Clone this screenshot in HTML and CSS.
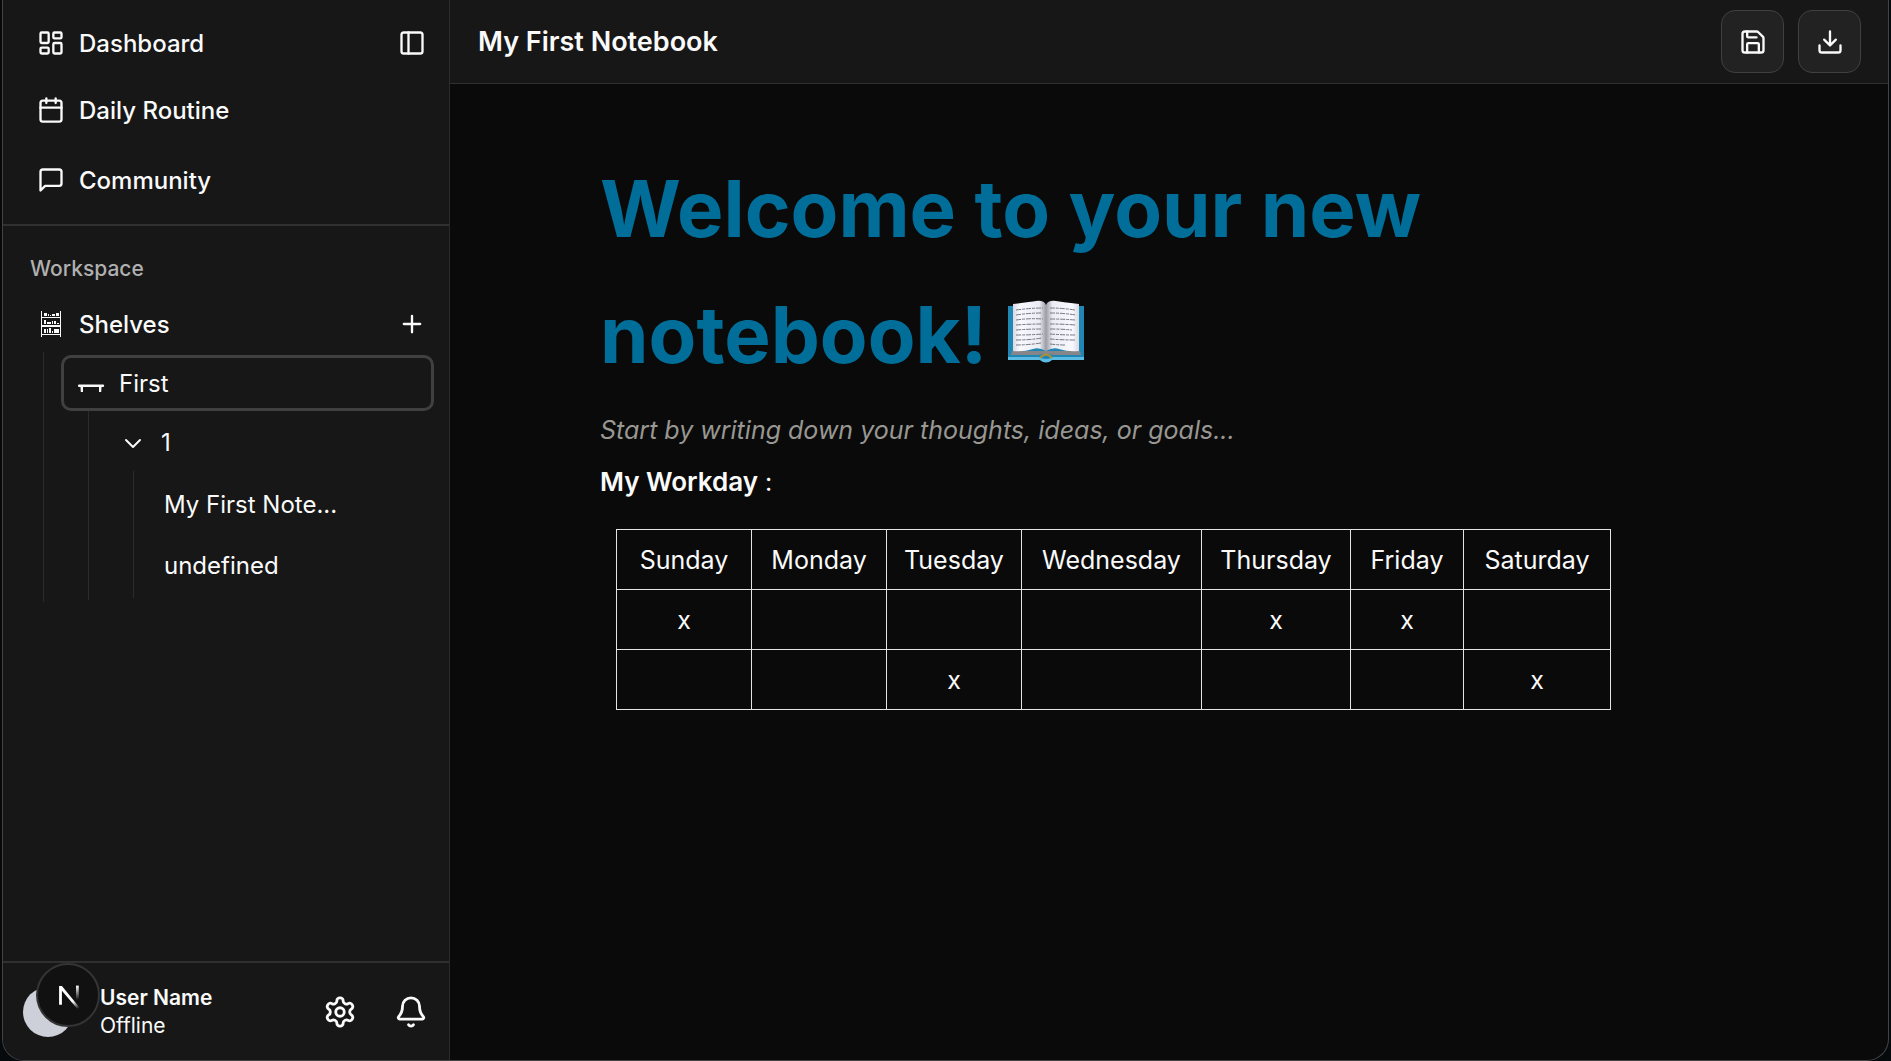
FILE: index.html
```html
<!DOCTYPE html>
<html lang="en">
<head>
<meta charset="utf-8">
<meta name="viewport" content="width=device-width, initial-scale=1">
<title>My First Notebook</title>
<link rel="stylesheet" href="styles.css">
</head>
<body>
<div class="window">
  <aside class="sidebar">
    <nav class="nav" aria-label="Main">
      <div class="nav-row nav-row-top">
        <a class="nav-link" href="#dashboard">
          <svg class="icon" viewBox="0 0 24 24"><rect x="3" y="3" width="7" height="9" rx="1"/><rect x="14" y="3" width="7" height="5" rx="1"/><rect x="14" y="12" width="7" height="9" rx="1"/><rect x="3" y="16" width="7" height="5" rx="1"/></svg>
          Dashboard
        </a>
        <button class="icon-button" type="button" aria-label="Toggle sidebar">
          <svg class="icon" viewBox="0 0 24 24"><rect x="3" y="3" width="18" height="18" rx="2"/><path d="M9 3v18"/></svg>
        </button>
      </div>
      <a class="nav-link" href="#routine">
        <svg class="icon" viewBox="0 0 24 24"><path d="M8 2v4M16 2v4"/><rect x="3" y="4" width="18" height="18" rx="2"/><path d="M3 10h18"/></svg>
        Daily Routine
      </a>
      <a class="nav-link" href="#community">
        <svg class="icon" viewBox="0 0 24 24"><path d="M21 15a2 2 0 0 1-2 2H7l-4 4V5a2 2 0 0 1 2-2h14a2 2 0 0 1 2 2z"/></svg>
        Community
      </a>
    </nav>
    <section class="workspace">
      <h2 class="section-label">Workspace</h2>
      <div class="nav-row">
        <a class="nav-link" href="#shelves">
          <svg class="icon icon-solid" viewBox="0 0 28 28"><path d="M4 1h1v26H4zM23 1h1v26h-1zM5 7h18v1H5zM5 15h18v2H5zM5 24h18v1H5zM7 3h3v3H7zM11 4h1v2h-1zM13 5h1v1h-1zM15 4h3v2h-3zM19 3h3v3h-3zM7 10h2v4H7zM10 12h4v2h-4zM15 11h1v3h-1zM17 11h2v3h-2zM20 13h2v1h-2zM7 19h2v4H7zM10 19h1v4h-1zM12 18h2v5h-2zM15 21h1v2h-1zM17 19h5v4h-5z"/></svg>
          Shelves
        </a>
        <button class="icon-button" type="button" aria-label="Add shelf">
          <svg class="icon" viewBox="0 0 24 24"><path d="M5 12h14M12 5v14"/></svg>
        </button>
      </div>
      <div class="branch">
        <button class="shelf" type="button">
          <svg class="icon icon-solid" viewBox="0 0 28 28"><path d="M1 16.500a1 1 0 0 1 1-1h24a1 1 0 0 1 0 2.400H2a1 1 0 0 1-1-1zM3.500 18H6v5H3.800zM22 18h2.500l-.3 5H22z"/></svg>
          First
        </button>
        <div class="branch">
          <button class="folder" type="button" aria-expanded="true">
            <svg class="icon" viewBox="0 0 24 24"><path d="m5 9 7 7 7-7"/></svg>
            1
          </button>
          <div class="branch">
            <a class="page-link" href="#first">My First Note...</a>
            <a class="page-link" href="#undefined">undefined</a>
          </div>
        </div>
      </div>
    </section>
    <footer class="user">
      <div class="avatar">
        <button class="dev-badge" type="button" aria-label="Open dev tools">
          <svg class="dev-mark" viewBox="0 0 64 64" fill="none">
            <defs>
              <linearGradient id="slant" x1="38" y1="38" x2="44" y2="46" gradientUnits="userSpaceOnUse"><stop stop-color="#fff"/><stop offset="1" stop-color="#fff" stop-opacity="0"/></linearGradient>
              <linearGradient id="stem" x1="0" y1="22" x2="0" y2="37" gradientUnits="userSpaceOnUse"><stop stop-color="#fff"/><stop offset="1" stop-color="#fff" stop-opacity="0"/></linearGradient>
            </defs>
            <path d="M22.500 42.500h3V27.500L42.500 47.500l2-2L25.500 22.500h-3z" fill="url(#slant)"/>
            <path d="M42 22v16" stroke="url(#stem)" stroke-width="3"/>
          </svg>
        </button>
      </div>
      <div class="user-text">
        <strong>User Name</strong>
        <span>Offline</span>
      </div>
      <button class="icon-button" type="button" aria-label="Settings">
        <svg class="icon icon-large" viewBox="0 0 24 24"><path d="M12.220 2h-.44a2 2 0 0 0-2 2v.18a2 2 0 0 1-1 1.730l-.43.25a2 2 0 0 1-2 0l-.15-.08a2 2 0 0 0-2.730.73l-.22.38a2 2 0 0 0 .73 2.730l.15.1a2 2 0 0 1 1 1.720v.51a2 2 0 0 1-1 1.740l-.15.09a2 2 0 0 0-.73 2.730l.22.38a2 2 0 0 0 2.730.73l.15-.08a2 2 0 0 1 2 0l.43.25a2 2 0 0 1 1 1.730V20a2 2 0 0 0 2 2h.44a2 2 0 0 0 2-2v-.18a2 2 0 0 1 1-1.730l.43-.25a2 2 0 0 1 2 0l.15.08a2 2 0 0 0 2.730-.73l.22-.39a2 2 0 0 0-.73-2.730l-.15-.08a2 2 0 0 1-1-1.740v-.5a2 2 0 0 1 1-1.740l.15-.09a2 2 0 0 0 .73-2.730l-.22-.38a2 2 0 0 0-2.730-.73l-.15.08a2 2 0 0 1-2 0l-.43-.25a2 2 0 0 1-1-1.730V4a2 2 0 0 0-2-2z"/><circle cx="12" cy="12" r="3"/></svg>
      </button>
      <button class="icon-button" type="button" aria-label="Notifications">
        <svg class="icon icon-large" viewBox="0 0 24 24"><path d="M10.268 21a2 2 0 0 0 3.464 0"/><path d="M3.262 15.326A1 1 0 0 0 4 17h16a1 1 0 0 0 .74-1.673C19.410 13.956 18 12.499 18 8A6 6 0 0 0 6 8c0 4.499-1.411 5.956-2.738 7.326"/></svg>
      </button>
    </footer>
  </aside>
  <main class="main">
    <header class="topbar">
      <span class="doc-title">My First Notebook</span>
      <button class="tool" type="button" aria-label="Save">
        <svg class="icon" viewBox="0 0 24 24"><path d="M15.200 3a2 2 0 0 1 1.400.6l3.800 3.800a2 2 0 0 1 .6 1.400V19a2 2 0 0 1-2 2H5a2 2 0 0 1-2-2V5a2 2 0 0 1 2-2z"/><path d="M17 21v-7a1 1 0 0 0-1-1H8a1 1 0 0 0-1 1v7M7 3v4a1 1 0 0 0 1 1h7"/></svg>
      </button>
      <button class="tool" type="button" aria-label="Download">
        <svg class="icon" viewBox="0 0 24 24"><path d="M12 3v12M7 10l5 5 5-5M21 15v4a2 2 0 0 1-2 2H5a2 2 0 0 1-2-2v-4"/></svg>
      </button>
    </header>
    <article class="editor">
      <h1 class="headline">Welcome to your new notebook!
        <svg class="book" viewBox="0 0 80 64" role="img" aria-label="Open book">
          <defs>
            <linearGradient id="leaf"><stop stop-color="#d8d8e0"/><stop offset=".2" stop-color="#f8f8ff"/><stop offset=".8" stop-color="#ececf4"/><stop offset="1" stop-color="#9c9ca6"/></linearGradient>
            <linearGradient id="leaf-right"><stop stop-color="#9c9ca6"/><stop offset=".2" stop-color="#ececf4"/><stop offset=".8" stop-color="#f8f8ff"/><stop offset="1" stop-color="#d8d8e0"/></linearGradient>
          </defs>
          <path d="M2 7h76v54H46q-6 4-12 0H2z" fill="#2086b4"/>
          <path d="M2 58h31q7 4 14 0h31v3H46q-6 5-12 0H2z" fill="#5bbbe2"/>
          <path d="M6 52h68l1 4H48q-8-2-16 0H5z" fill="#85858a"/>
          <path d="M7 5Q25 3 30 2q8-1 10 4v46q-7-4-13-2-9 3-20 2z" fill="url(#leaf)"/>
          <path d="M73 5Q55 3 50 2q-8-1-10 4v46q7-4 13-2 9 3 20 2z" fill="url(#leaf-right)"/>
          <path d="M34 59q6-7 12 0" fill="none" stroke="#ae9136" stroke-width="2"/>
          <path d="M10 11q15-2 27-2M10 16q13-2 26-2M10 21q14-2 27-1M10 26q14-1 26-1M10 31q14-1 25-1M10 36q15 0 27-1M10 41q14 0 26-2M10 46q12 0 25-2M44 9q12 0 25 2M44 14q13 0 26 2M44 20q13 0 25 1M44 25q12 0 26 1M44 30q12 0 22 1M44 35q13 1 26 1M44 40q12 1 26 1M44 45q8 1 15 1" fill="none" stroke="#777780" stroke-width="1" stroke-dasharray="5 1 3 1"/>
        </svg>
      </h1>
      <p class="lead">Start by writing down your thoughts, ideas, or goals...</p>
      <p class="line"><strong>My Workday</strong> :</p>
      <table class="week">
        <colgroup><col class="col-day"><col class="col-day"><col class="col-day"><col class="col-wed"><col class="col-thu"><col class="col-fri"><col class="col-sat"></colgroup>
        <tbody>
          <tr><td>Sunday</td><td>Monday</td><td>Tuesday</td><td>Wednesday</td><td>Thursday</td><td>Friday</td><td>Saturday</td></tr>
          <tr><td>x</td><td></td><td></td><td></td><td>x</td><td>x</td><td></td></tr>
          <tr><td></td><td></td><td>x</td><td></td><td></td><td></td><td>x</td></tr>
        </tbody>
      </table>
    </article>
  </main>
</div>
</body>
</html>
```
FILE: styles.css
```css
* { box-sizing: border-box; }

body {
  margin: 0;
  padding: 0 2px;
  background: #060a0d;
  color: #fafafa;
  font-family: Inter, "Liberation Sans", sans-serif;
  font-size: 24px;
}

button {
  padding: 0;
  border: 0;
  background: none;
  color: inherit;
  font: inherit;
  cursor: pointer;
}

a { color: inherit; text-decoration: none; }
h1, h2, p { margin: 0; }

.window {
  display: flex;
  min-height: 100vh;
  border: 1px solid #434343;
  border-top: 0;
  border-radius: 0 0 22px 22px;
  background: #0a0a0a;
  overflow: hidden;
}

.icon {
  flex: none;
  width: 28px;
  height: 28px;
  fill: none;
  stroke: currentColor;
  stroke-width: 2;
  stroke-linecap: round;
  stroke-linejoin: round;
}
.icon-solid { fill: currentColor; stroke: none; }
.icon-large { width: 34px; height: 34px; }

.icon-button {
  display: flex;
  align-items: center;
  justify-content: center;
  width: 44px;
  height: 44px;
}

/* Sidebar */
.sidebar {
  display: flex;
  flex: none;
  flex-direction: column;
  width: 447px;
  border-right: 1px solid #2b2b2b;
  background: #171717;
}

.nav {
  display: flex;
  flex-direction: column;
  gap: 14px;
  padding: 18px 15px 16px 16px;
  border-bottom: 2px solid #303030;
}

.nav-row { display: flex; align-items: center; justify-content: space-between; }
.nav-row-top { height: 50px; }

.nav-link {
  display: flex;
  align-items: center;
  gap: 14px;
  height: 56px;
  padding-left: 18px;
  font-weight: 500;
}

.workspace { flex: 1; padding: 28px 15px 28px 16px; }

.section-label {
  padding: 0 11px 12px;
  color: #b0b0b0;
  font-size: 21px;
  font-weight: 500;
  line-height: 30px;
}

.branch {
  display: flex;
  flex-direction: column;
  margin-left: 24px;
  padding: 3px 0 2px 17px;
  border-left: 1px solid #2b2b2b;
}
.branch .branch { margin-left: 27px; }

.shelf {
  display: flex;
  align-items: center;
  gap: 14px;
  height: 56px;
  padding-left: 13px;
  border: 3px solid #404040;
  border-radius: 10px;
}

.folder {
  display: flex;
  align-items: center;
  gap: 16px;
  height: 57px;
  padding-left: 15px;
}
.folder .icon { width: 24px; height: 24px; }

.page-link {
  padding-left: 13px;
  line-height: 61px;
}

.user {
  display: flex;
  align-items: center;
  gap: 27px;
  height: 99px;
  padding: 0 16px 0 20px;
  border-top: 2px solid #303030;
}

.avatar {
  position: relative;
  width: 50px;
  height: 50px;
  border-radius: 50%;
  background: #cdd0d8;
}

.dev-badge {
  position: absolute;
  top: -24px;
  left: 13px;
  width: 64px;
  height: 64px;
  border: 2px solid #343434;
  border-radius: 50%;
  background: #111;
}
.dev-mark { display: block; width: 60px; height: 60px; }

.user-text {
  display: flex;
  flex: 1;
  flex-direction: column;
  font-size: 21px;
  line-height: 28px;
}
.user-text strong { font-weight: 600; }

/* Document */
.main { flex: 1; min-width: 0; }

.topbar {
  display: flex;
  align-items: center;
  gap: 14px;
  height: 84px;
  padding: 0 27px 0 28px;
  border-bottom: 1px solid #2f2f2f;
  background: #171717;
}
.doc-title { flex: 1; font-size: 27px; font-weight: 600; }

.tool {
  display: flex;
  align-items: center;
  justify-content: center;
  width: 63px;
  height: 63px;
  border: 1px solid #404040;
  border-radius: 14px;
  background: #222;
}

.editor { padding: 62px 150px; font-size: 25px; }

.headline {
  margin-bottom: 6px;
  color: #006e99;
  font-size: 78px;
  font-weight: 700;
  line-height: 126px;
}
.book { width: 80px; height: 64px; }

.lead { color: #989792; font-style: italic; line-height: 52px; }
.line { line-height: 52px; }
.line strong { font-size: 26px; font-weight: 600; }

.week {
  margin: 21px 16px;
  border-collapse: collapse;
  table-layout: fixed;
  width: 995px;
}
.week td {
  height: 60px;
  padding: 0;
  border: 1px solid #e2e5e2;
  text-align: center;
}
.col-day { width: 135px; }
.col-wed { width: 180px; }
.col-thu { width: 149px; }
.col-fri { width: 113px; }
```
